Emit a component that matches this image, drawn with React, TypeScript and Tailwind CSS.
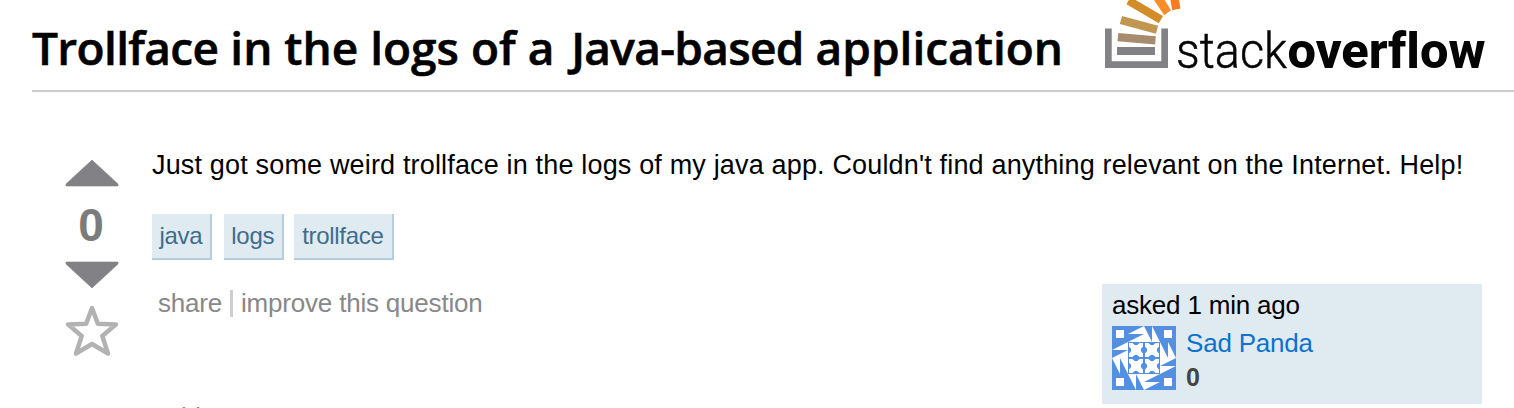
import React from "react";

const tags = [
  { name: "java", box: "mr-3 px-[7.5px]" },
  { name: "logs", box: "mr-2.5 px-[7.5px]" },
  { name: "trollface", box: "px-[8.5px]" },
];

function Logo() {
  return (
    <svg width="400" height="76" viewBox="0 0 400 76" className="block shrink-0" aria-label="stackoverflow">
      <path d="M5 28.500h6.700v32.800h49.600V28.500H68V68H5z" fill="#828286" />
      <path d="M17 47h38v8H17z" fill="#828286" />
      <path d="M18.300 33l37.500 3.300-.6 8.200-37.700-3.300z" fill="#a78b6f" />
      <path d="M22 16l36.200 9.800-2.300 8L19.800 24z" fill="#c19651" />
      <path d="M30.500-3L63 16l-4.200 7.300L26.500 4.300z" fill="#d48c28" />
      <path d="M61.500-5L71 10.300l-6.800 5L52-3z" fill="#fb8c26" />
      <path d="M78-5l2.500 13.500-8.200 1.800L69.500-5z" fill="#f87a22" />
      <g className="font-['Roboto','Liberation_Sans',sans-serif] text-[50px] [font-variant-ligatures:none]" fill="#050505">
        <text x="76" y="67.500" fontWeight="300" stroke="#050505" strokeWidth=".5" textLength="111" lengthAdjust="spacingAndGlyphs">stack</text>
        <text x="187.500" y="67.500" fontWeight="800" textLength="198" lengthAdjust="spacingAndGlyphs">overflow</text>
      </g>
    </svg>
  );
}

function Avatar() {
  return (
    <svg width="64" height="64" viewBox="0 0 64 64" className="block shrink-0">
      <rect width="64" height="64" fill="#5390e1" />
      {[0, 90, 180, 270].map((turn) => (
        <g key={turn} transform={`rotate(${turn} 32 32)`} fill="#fff">
          <path d="M4 4h8v8H4z" />
          <path d="M16 8L32 0v8zM16 16l16-8v8z" />
          <path d="M0 24l16-8v8zM0 32l16-8v8z" />
          <path d="M17 17h3.500q3.500 4.500 7 0h3.500v3.500q-4.500 3.500 0 7v3.500h-3.500q-3.500-4.500-7 0H17v-3.500q4.500-3.500 0-7z" />
        </g>
      ))}
    </svg>
  );
}

function Votes() {
  return (
    <div className="flex w-[54px] flex-col items-center">
      <svg width="54" height="28" viewBox="0 0 54 28" className="block">
        <path d="M27 1L53 25v2H1v-2z" fill="#828185" stroke="#828185" strokeWidth=".6" strokeLinejoin="round" />
      </svg>
      <div className="flex h-[74px] items-center pt-0.5 pr-0.5 text-[46px] leading-none font-bold text-[#7b7b7b]">0</div>
      <svg width="54" height="28" viewBox="0 0 54 28" className="block">
        <path d="M27 27L53 3V1H1v2z" fill="#828185" stroke="#828185" strokeWidth=".6" strokeLinejoin="round" />
      </svg>
      <svg width="54" height="54" viewBox="0 0 54 54" className="mt-4 block">
        <path d="M27 3l5.800 15.700 18.200.7-13.700 11.600 5.700 17.500L27 39 11 48.500l5.700-17.500L3 19.400l18.200-.7z" fill="none" stroke="#b2b2b2" strokeWidth="4.500" strokeLinejoin="round" />
      </svg>
    </div>
  );
}

export default function App() {
  return (
    <main className="h-[408px] w-[1514px] overflow-hidden bg-white font-['Liberation_Sans',Arial,sans-serif] text-black">
      <header className="ml-8 flex h-[92px] items-start border-b-2 border-[#cccccc]">
        <h1 className="mt-[15px] w-[1068px] shrink-0 font-['Open_Sans','Noto_Sans',sans-serif] text-[46px] leading-[64px] font-semibold whitespace-nowrap [-webkit-text-stroke:0.6px_black]">
          <span className="tracking-[-0.65px]">Trollface</span> in the logs of a{" "}
          <span className="ml-[5px] tracking-[-0.7px]">Java-based</span> application
        </h1>
        <Logo />
      </header>
      <div className="flex pt-[67px] pl-[65px]">
        <Votes />
        <div className="ml-[33px] w-[1330px] shrink-0">
          <p className="-mt-[11px] h-[66px] text-[27px] leading-[34px] tracking-[0.165px] whitespace-nowrap">
            Just got some weird trollface in the logs of my java app. Couldn't find anything relevant on the Internet. Help!
          </p>
          <ul className="flex h-[46px]">
            {tags.map((tag) => (
              <li key={tag.name} className={`flex items-center border-r-2 border-b-2 border-[#b3cee1] bg-[#e0eaf1] text-[24px] leading-[30px] tracking-[-0.3px] text-[#3e6d8e] ${tag.box}`}>
                {tag.name}
              </li>
            ))}
          </ul>
          <div className="mt-6 flex items-start justify-between">
            <div className="pl-1.5 text-[26px] leading-[38px] tracking-[-0.2px] whitespace-nowrap text-[#888888]">
              <div className="flex items-center">
                <span>share</span>
                <span className="mx-2 h-[27px] w-[3px] bg-[#d3cccc]" />
                <span>improve this question</span>
              </div>
              <div className="mt-[76px]">add a comment</div>
            </div>
            <aside className="h-[120px] w-[380px] bg-[#e0eaf1] px-2.5 pt-1 text-[26px] tracking-[-0.2px]">
              <div className="h-[38px] leading-[34px]">asked 1 min ago</div>
              <div className="flex gap-2.5">
                <Avatar />
                <div className="leading-[34px]">
                  <div className="text-[#0c72cc]">Sad Panda</div>
                  <div className="text-[25px] font-bold text-[#444444]">0</div>
                </div>
              </div>
            </aside>
          </div>
        </div>
      </div>
    </main>
  );
}
